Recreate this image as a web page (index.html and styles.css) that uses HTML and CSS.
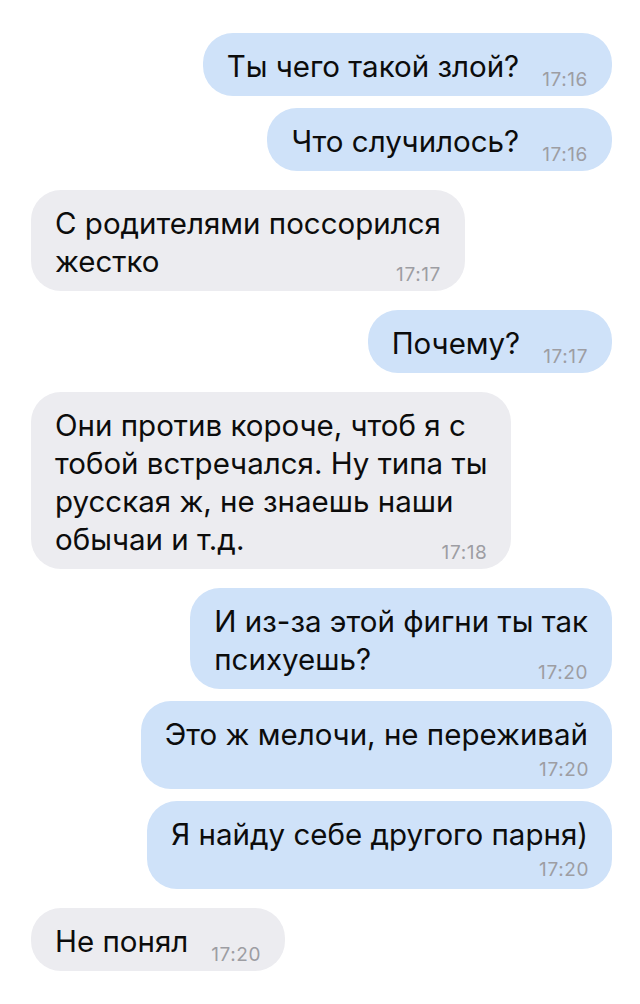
FILE: index.html
```html
<!DOCTYPE html>
<html lang="ru">
<head>
  <meta charset="UTF-8">
  <title>Переписка</title>
  <link rel="stylesheet" href="styles.css">
</head>
<body>

  <div class="chat">
    <div class="msg out">Ты чего такой злой?<span class="time">17:16</span></div>
    <div class="msg out">Что случилось?<span class="time">17:16</span></div>

    <div class="msg in">С родителями поссорился<br>жестко<span class="time">17:17</span></div>

    <div class="msg out">Почему?<span class="time">17:17</span></div>

    <div class="msg in">Они против короче, чтоб я с<br>тобой встречался. Ну типа ты<br>русская ж, не знаешь наши<br>обычаи и т.д.<span class="time">17:18</span></div>

    <div class="msg out">И из-за этой фигни ты так<br>психуешь?<span class="time">17:20</span></div>
    <!-- long lines: time drops below the text -->
    <div class="msg out stacked">Это ж мелочи, не переживай<span class="time">17:20</span></div>
    <div class="msg out stacked">Я найду себе другого парня)<span class="time">17:20</span></div>

    <div class="msg in">Не понял<span class="time">17:20</span></div>
  </div>

</body>
</html>
```

FILE: styles.css
```css
* {
  margin: 0;
  padding: 0;
  box-sizing: border-box;
}

body {
  font-family: 'Inter', 'Liberation Sans', sans-serif;
  background: #fff;
  color: #0c0c0c;
  width: 640px;
  height: 1004px;
  overflow: hidden;
}

.chat {
  display: flex;
  flex-direction: column;
  padding: 33px 28px 0 31px;
}

/* message bubble */
.msg {
  display: flow-root;
  width: fit-content;
  padding: 14px 24px 11px;
  border-radius: 30px;
  font-size: 29.5px;
  line-height: 38px;
  white-space: nowrap;
}

.msg + .msg {
  margin-top: 12px;
}

.in + .out,
.out + .in {
  margin-top: 19px;
}

.out {
  align-self: flex-end;
  background: #cfe2f9;
}

.in {
  align-self: flex-start;
  background: #ececf0;
}

/* time sits on the last line, slightly below the text baseline */
.time {
  float: right;
  margin: 22px 0 -22px 23px;
  font-size: 19px;
  line-height: 22px;
  letter-spacing: 0.6px;
  color: #9d9da3;
}

.stacked {
  padding-bottom: 8px;
}

.stacked .time {
  float: none;
  display: block;
  text-align: right;
  margin: 6px -1px 0 0;
}
```
